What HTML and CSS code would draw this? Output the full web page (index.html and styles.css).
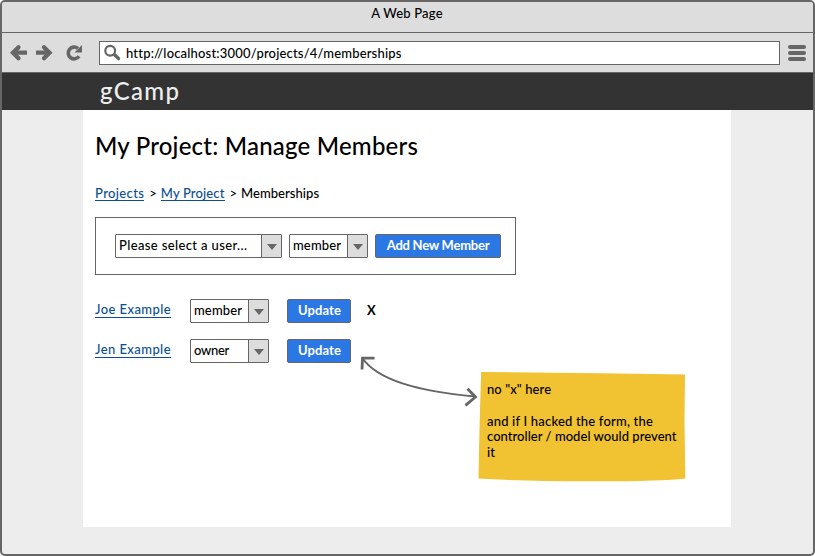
FILE: index.html
```
<!DOCTYPE html>
<html lang="en">
<head>
<meta charset="utf-8">
<title>gCamp</title>
<link rel="stylesheet" href="styles.css">
</head>
<body>
<div class="window">
  <div class="titlebar"><span class="t-title">A Web Page</span></div>
  <div class="toolbar">
    <svg class="nav" width="82" height="18" viewBox="0 0 82 18" fill="none" stroke="#666" stroke-width="4.300">
      <path d="M5.500 8.700H19M28 8.700H41.500"/>
      <path d="M10.500 3.200L5 8.700L10.500 14.200M36 3.200L41.500 8.700L36 14.200" stroke-linecap="round"/>
      <path d="M71 12.300A5.900 5.900 0 1 1 70 4.500" stroke-width="3.600"/>
      <path d="M74 1V8.500H66.500Z" fill="#666" stroke="none"/>
    </svg>
    <div class="address">
      <svg width="18" height="18" viewBox="0 0 18 18" fill="none" stroke="#666">
        <circle cx="6.200" cy="6.700" r="4.900" stroke-width="2.200"/>
        <path d="M10.500 10.800L14.500 14.600" stroke-width="3.400" stroke-linecap="round"/>
      </svg>
      <span class="t-url">http://localhost:3000/projects/4/memberships</span>
    </div>
    <div class="menu"><i></i><i></i><i></i></div>
  </div>
  <header class="brand"><span class="t-brand">gCamp</span></header>
  <main class="page">
    <h1>My Project: Manage Members</h1>
    <nav class="crumbs">
      <a class="t-projects">Projects</a><span class="sep">&gt;</span><a class="t-project">My Project</a><span class="sep">&gt;</span><span class="t-memberships">Memberships</span>
    </nav>
    <section class="add-form">
      <div class="select user"><span class="t-please">Please select a user...</span><b></b></div>
      <div class="select"><span class="t-member">member</span><b></b></div>
      <div class="button add"><span class="t-add">Add New Member</span></div>
    </section>
    <section class="members">
      <div class="member-row">
        <div class="name"><a>Joe Example</a></div>
        <div class="select"><span class="t-member">member</span><b></b></div>
        <div class="button update"><span class="t-update">Update</span></div>
        <span class="remove">X</span>
      </div>
      <div class="member-row">
        <div class="name"><a>Jen Example</a></div>
        <div class="select"><span class="t-owner">owner</span><b></b></div>
        <div class="button update"><span class="t-update">Update</span></div>
      </div>
    </section>
  </main>
  <svg class="annotation" width="340" height="140" viewBox="350 350 340 140">
    <path d="M481.200 372L600 373.200L685 374.600L684.500 420L685.300 478.500Q660 481.500 590 481.300Q520 481 478.500 478.500Q479.500 420 481.200 372Z" fill="#f1c232"/>
    <g fill="none" stroke="#666">
      <path d="M362 357.500C377 380 417 391 475 396.500" stroke-width="2"/>
      <path d="M362 369.500L362.500 358.200L374.500 358.200M467.500 388.800L475.500 397L465.500 405.300" stroke-width="2.800"/>
    </g>
  </svg>
  <div class="note">
    <p class="n1">no "x" here</p>
    <p class="n2">and if I hacked the form, the</p>
    <p class="n3">controller / model would prevent</p>
    <p>it</p>
  </div>
</div>
</body>
</html>
```
FILE: styles.css
```
* { box-sizing: border-box; }
body {
  margin: 0;
  background: #fff;
  color: #000;
  font: 500 13px/16px Lato, sans-serif;
  white-space: nowrap;
}
.window {
  position: relative;
  height: 556px;
  border: 2px solid #666;
  border-radius: 5px;
  background: #ededed;
  overflow: hidden;
}
.titlebar {
  height: 31px;
  padding: 3px 1px 0 0;
  background: #ddd;
  border-bottom: 1px solid #666;
  text-align: center;
}
.toolbar {
  display: flex;
  align-items: center;
  height: 40px;
  padding: 0 7px 0 6px;
  background: #ddd;
  border-bottom: 1px solid #666;
}
.nav { flex: none; margin-right: 9px; }
.address {
  display: flex;
  align-items: center;
  gap: 4px;
  width: 681px;
  height: 24px;
  padding-left: 4px;
  background: #fff;
  border: 1px solid #666;
}
.menu {
  display: flex;
  flex-direction: column;
  gap: 2px;
  margin-left: 8px;
}
.menu i { width: 18px; height: 4px; border-radius: 2px; background: #666; }
.brand {
  height: 37px;
  padding-left: 98px;
  background: #333;
  color: #eee;
  font-size: 24px;
  line-height: 36px;
}
.page {
  width: 648px;
  height: 417px;
  margin-left: 81px;
  padding: 21px 12px 0;
  background: #fff;
}
h1 {
  margin: 0;
  font-size: 24px;
  font-weight: 500;
  line-height: 30px;
  letter-spacing: .21px;
}
.crumbs { display: flex; margin-top: 24px; height: 16px; }
.crumbs a, .name a { color: #0b4f93; border-bottom: 1px solid #0b4f93; height: 16px; }
.sep { width: 16.500px; padding-left: 5px; }
.add-form {
  display: flex;
  width: 421px;
  height: 58px;
  margin-top: 16px;
  padding: 16px 0 0 19px;
  border: 1px solid #666;
}
.select {
  display: flex;
  justify-content: space-between;
  width: 79px;
  height: 24px;
  margin-right: 7px;
  padding-left: 3px;
  border: 1px solid #666;
  border-radius: 1px;
  line-height: 21px;
}
.select.user { width: 167px; }
.select b {
  display: flex;
  align-items: center;
  justify-content: center;
  width: 20px;
  background: #ddd;
  border-left: 1px solid #666;
}
.select b::after {
  content: "";
  margin-top: 2px;
  border: 5.500px solid transparent;
  border-top: 6px solid #666;
  border-bottom: 0;
}
.button {
  height: 24px;
  border: 1px solid #666;
  border-radius: 2px;
  background: #2b78e4;
  color: #fff;
  line-height: 21px;
  text-align: center;
  font-weight: 700;
}
.add { width: 126px; }
.update { width: 64px; padding-left: 1px; }
.members { display: flex; flex-direction: column; gap: 16px; margin-top: 24px; }
.member-row { display: flex; height: 24px; }
.member-row .select { margin-right: 18px; }
.name { width: 95px; padding-top: 2px; }
.name a { display: inline-block; height: 17px; letter-spacing: .42px; }
.remove { margin-left: 16px; line-height: 23px; font-weight: 700; }
.annotation { position: absolute; left: 348px; top: 348px; }
.note {
  position: absolute;
  left: 485px;
  top: 380px;
  line-height: 15.700px;
}
.note p { margin: 0; }
.note .n1 { margin-bottom: 16px; letter-spacing: .09px; }
.n2 { letter-spacing: .19px; }
.n3 { letter-spacing: .04px; }
.t-title { letter-spacing: .21px; }
.t-url { letter-spacing: .18px; }
.t-brand { letter-spacing: 1.330px; }
.t-projects { letter-spacing: .38px; }
.t-project { letter-spacing: .14px; }
.t-memberships { letter-spacing: .05px; }
.t-please { letter-spacing: .37px; }
.t-member { letter-spacing: .13px; }
.t-owner { letter-spacing: -.3px; }
.t-add { letter-spacing: -.24px; }
.t-update { letter-spacing: .11px; }
```
